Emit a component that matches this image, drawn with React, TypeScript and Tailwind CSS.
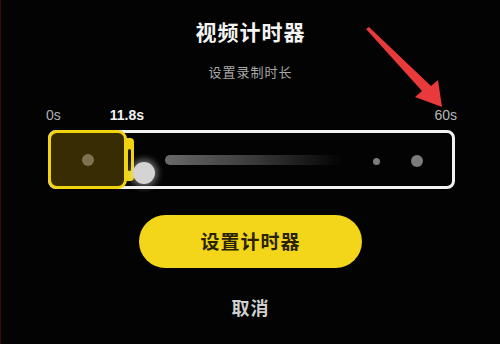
import React from 'react';

const font = { fontFamily: '"Noto Sans CJK SC", "Noto Sans", sans-serif' };

const RedArrow: React.FC = () => (
  <svg className="pointer-events-none absolute left-0 top-0" width="500" height="344" viewBox="0 0 500 344">
    <polygon
      points="365,29 421,91 414,97 441,107 437,80 430,86 368,27"
      fill="#e8393b"
    />
  </svg>
);

const TimerTrack: React.FC = () => (
  <div className="relative ml-[47px] h-[59px] w-[407px] rounded-[8px] border-[3px] border-[#f2f2f2]">
    {/* fading waveform strip */}
    <div className="absolute left-[114px] top-[22px] h-[10px] w-[176px] rounded-l-full bg-gradient-to-r from-[#6a6a6a] via-[#3a3a3a] to-transparent" />
    <div className="absolute left-[322px] top-[25px] h-[7px] w-[7px] rounded-full bg-[#7c7c7c]" />
    <div className="absolute left-[360px] top-[22px] h-[12px] w-[12px] rounded-full bg-[#7c7c7c]" />

    {/* selected range */}
    <div className="absolute -left-[3px] -top-[3px] flex h-[59px] w-[79px] items-center justify-center rounded-[9px] border-[3px] border-[#f1d40f] bg-[#372c02]">
      <div className="h-[12px] w-[12px] rounded-full bg-[#7d7250]" />
    </div>
    <div className="absolute left-[73px] top-[5px] flex h-[43px] w-[10px] items-center justify-center rounded-r-[4px] bg-[#f1d40f]">
      <div className="h-[22px] w-[3px] rounded-full bg-[#1a1500]" />
    </div>

    {/* playhead */}
    <div className="absolute left-[82px] top-[29px] h-[22px] w-[22px] rounded-full bg-[#d4d4d4] shadow-[0_0_6px_3px_rgba(220,220,220,0.45)]" />
  </div>
);

const App: React.FC = () => {
  return (
    <div
      className="relative h-[344px] w-[500px] overflow-hidden border-l border-[#3a0c0c] bg-[#030303]"
      style={font}
    >
      <div className="flex flex-col">
        <h1 className="mt-[17px] text-center text-[21px] font-bold leading-[28px] tracking-[1px] text-[#f4f4f4]">
          视频计时器
        </h1>
        <p className="mt-[17px] text-center text-[13px] leading-[20px] tracking-[1px] text-[#a8a8a8]">
          设置录制时长
        </p>

        <div
          className="mt-[24px] flex h-[18px] items-center pl-[45px] pr-[43px] text-[14px] leading-[18px]"
          style={{ fontFamily: '"Liberation Sans", Arial, sans-serif' }}
        >
          <span className="text-[#b0b0b0]">0s</span>
          <span className="ml-[49px] font-bold text-[#f4f4f4]">11.8s</span>
          <span className="ml-auto text-[#b8b8b8]">60s</span>
        </div>

        <div className="mt-[6px]">
          <TimerTrack />
        </div>

        <button className="mx-auto mt-[26px] flex h-[53px] w-[223px] items-center justify-center rounded-full bg-[#f3d61a] text-[19px] font-bold tracking-[1px] text-[#2a2404]">
          设置计时器
        </button>

        <button className="mx-auto mt-[27px] text-[18px] font-bold leading-[24px] tracking-[1px] text-[#cfcfcf]">
          取消
        </button>
      </div>

      <RedArrow />
    </div>
  );
};

export default App;
